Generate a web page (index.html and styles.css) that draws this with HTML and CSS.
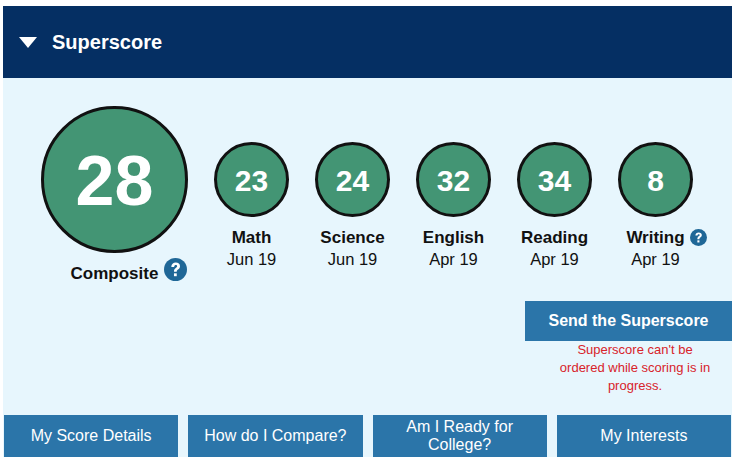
FILE: index.html
```html
<!DOCTYPE html>
<html lang="en">
<head>
  <meta charset="UTF-8">
  <title>Superscore</title>
  <link rel="stylesheet" href="styles.css">
</head>
<body>

  <div class="panel">
    <div class="panel-head">
      <span class="caret"></span>
      <h2>Superscore</h2>
    </div>

    <div class="panel-body">
      <div class="scores">
        <div class="composite">
          <div class="circle circle-big">28</div>
          <div class="composite-label">
            Composite
            <svg class="help help-big" viewBox="0 0 24 24"><use href="#help"></use></svg>
          </div>
        </div>

        <div class="subject">
          <div class="circle">23</div>
          <div class="subject-name">Math</div>
          <div class="subject-date">Jun 19</div>
        </div>
        <div class="subject">
          <div class="circle">24</div>
          <div class="subject-name">Science</div>
          <div class="subject-date">Jun 19</div>
        </div>
        <div class="subject">
          <div class="circle">32</div>
          <div class="subject-name">English</div>
          <div class="subject-date">Apr 19</div>
        </div>
        <div class="subject">
          <div class="circle">34</div>
          <div class="subject-name">Reading</div>
          <div class="subject-date">Apr 19</div>
        </div>
        <div class="subject">
          <div class="circle">8</div>
          <div class="subject-name">
            Writing
            <svg class="help" viewBox="0 0 24 24"><use href="#help"></use></svg>
          </div>
          <div class="subject-date">Apr 19</div>
        </div>
      </div>

      <div class="send">
        <a class="send-btn">Send the Superscore</a>
        <p class="send-note">Superscore can't be ordered while scoring is in progress.</p>
      </div>

      <div class="tabs">
        <a class="tab">My Score Details</a>
        <a class="tab">How do I Compare?</a>
        <a class="tab">Am I Ready for College?</a>
        <a class="tab">My Interests</a>
      </div>
    </div>
  </div>

  <svg class="defs" width="0" height="0">
    <symbol id="help" viewBox="0 0 24 24">
      <circle cx="12" cy="12" r="12" fill="#1f6797"></circle>
      <path d="M7.600 9.300c.1-2.800 2-4.500 4.700-4.500 2.600 0 4.400 1.500 4.400 3.700 0 1.700-.9 2.600-2.100 3.500-1 .7-1.300 1.200-1.300 2.400h-2.900c0-2 .5-3 1.900-4 .9-.7 1.400-1.100 1.400-1.800 0-.8-.6-1.300-1.400-1.300-.9 0-1.600.6-1.700 2z" fill="#fff"></path>
      <rect x="10.400" y="16" width="2.900" height="3" fill="#fff"></rect>
    </symbol>
  </svg>

</body>
</html>
```

FILE: styles.css
```css
* {
  box-sizing: border-box;
}

body {
  margin: 0;
  background: #ffffff;
  font-family: "Liberation Sans", Arial, sans-serif;
  color: #111;
}

.defs {
  display: block;
}

.panel {
  width: 729px;
  margin: 6px 0 0 3px;
}

.panel-head {
  height: 72px;
  background: #052f63;
  display: flex;
  align-items: center;
  padding-left: 16px;
  color: #fff;
}

.caret {
  width: 0;
  height: 0;
  border-left: 9.500px solid transparent;
  border-right: 9.500px solid transparent;
  border-top: 11px solid #fff;
  margin-right: 15px;
}

h2 {
  margin: 0;
  font-size: 20px;
  font-weight: bold;
}

.panel-body {
  height: 379px;
  background: #e7f6fd;
  display: flex;
  flex-direction: column;
}

.scores {
  display: flex;
  align-items: flex-start;
  padding: 28px 0 0 38px;
  height: 223px;
}

.circle {
  width: 75px;
  height: 75px;
  border-radius: 50%;
  border: 3px solid #111;
  background: #439574;
  color: #fff;
  font-size: 30px;
  font-weight: bold;
  display: flex;
  align-items: center;
  justify-content: center;
  padding-top: 2px;
}

.circle-big {
  width: 147px;
  height: 147px;
  font-size: 70px;
  padding-top: 3px;
}

.composite {
  width: 147px;
  display: flex;
  flex-direction: column;
  align-items: center;
  margin-right: 13px;
}

.composite-label {
  position: relative;
  font-size: 17px;
  font-weight: bold;
  line-height: 24px;
  margin-top: 9px;
  white-space: nowrap;
}

.help {
  position: absolute;
  left: 100%;
  top: 2px;
  margin-left: 5px;
  width: 17px;
  height: 17px;
}

.help-big {
  top: -4px;
  margin-left: 6px;
  width: 23px;
  height: 23px;
}

.subject {
  width: 101px;
  padding-top: 36px;
  display: flex;
  flex-direction: column;
  align-items: center;
}

.subject-name {
  position: relative;
  margin-top: 10px;
  font-size: 17px;
  font-weight: bold;
  line-height: 21px;
  white-space: nowrap;
}

.subject-date {
  font-size: 16.500px;
  line-height: 22px;
}

.send {
  width: 207px;
  margin-left: auto;
}

.send-btn {
  display: block;
  height: 40px;
  line-height: 40px;
  background: #2b75a9;
  color: #fff;
  font-size: 16px;
  font-weight: bold;
  text-align: center;
}

.send-note {
  width: 156px;
  margin: 0 0 0 32px;
  color: #d8232a;
  font-size: 13px;
  line-height: 18px;
  text-align: center;
}

.tabs {
  margin-top: auto;
  display: flex;
  gap: 10px;
  padding: 0 1px;
}

.tab {
  flex: 1;
  height: 42px;
  background: #2b75a9;
  color: #fff;
  font-size: 16px;
  line-height: 18px;
  text-align: center;
  display: flex;
  align-items: center;
  justify-content: center;
  padding: 0 10px;
}
```
